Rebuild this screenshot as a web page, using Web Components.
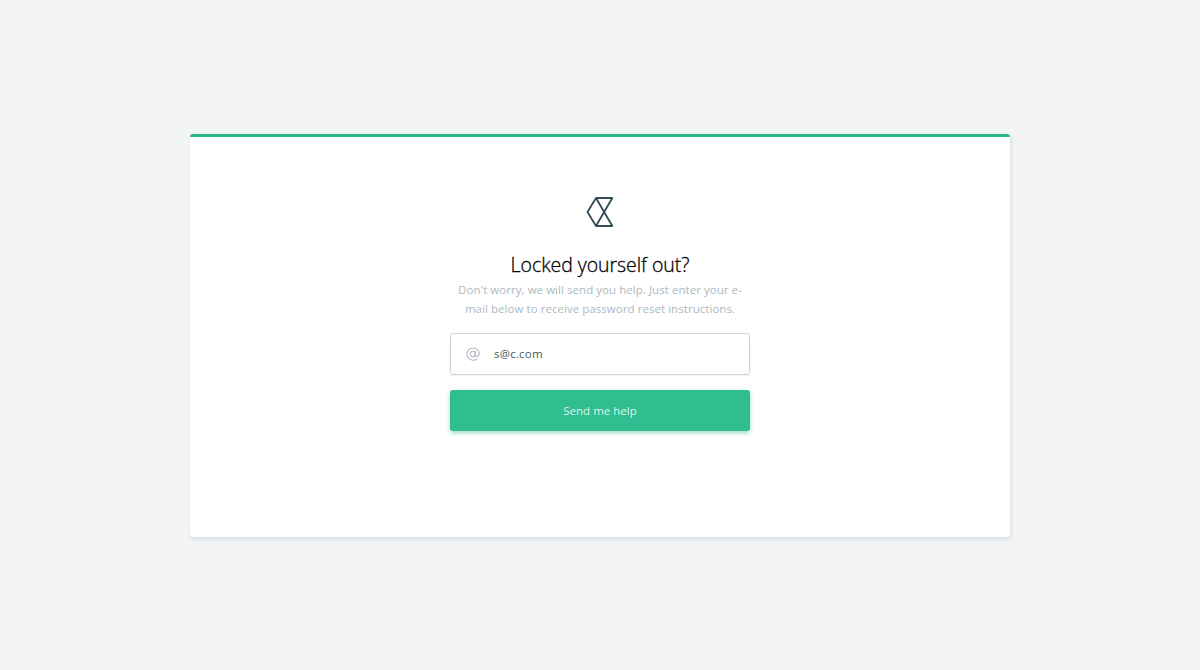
<!DOCTYPE html>
<html lang="en">
<head>
<meta charset="utf-8">
<title>Reset password</title>
<style>
body{margin:0;min-height:100vh;background:#f2f4f6;font-family:"Open Sans","Noto Sans",sans-serif;font-size:11.500px;display:grid;place-items:center}
</style>
</head>
<body>
<auth-card>
  <brand-logo></brand-logo>
  <card-heading>
    Locked yourself out?
    <span slot="first">Don't worry, we will send you help. Just enter your e-</span>
    <span slot="second">mail below to receive password reset instructions.</span>
  </card-heading>
  <email-field value="s@c.com"></email-field>
  <submit-button>Send me help</submit-button>
</auth-card>
<script>
const define = (name, html) => customElements.define(name, class extends HTMLElement {
  constructor() {
    super();
    this.attachShadow({mode: "open"}).innerHTML = html;
  }
  connectedCallback() {
    const input = this.shadowRoot.querySelector("input");
    if (input) input.value = this.getAttribute("value") || "";
  }
});

define("auth-card", `<style>
  :host{display:flex;flex-direction:column;align-items:center;box-sizing:border-box;width:820px;height:403px;margin-top:1px;padding-top:60px;background:#fff;border-top:3px solid #2bb68a;border-radius:3px;box-shadow:1px 2px 4px rgba(50,85,105,.14)}
</style><slot></slot>`);

define("brand-logo", `<style>
  :host{display:block;height:30px} svg{display:block}
</style><svg width="28" height="30" viewBox="0 0 28 30" fill="none" stroke="#334b55" stroke-width="1.800" stroke-linejoin="round">
  <path d="M10 1H26.300L10 29H26.300L10 1L1.500 15L10 29"/></svg>`);

define("card-heading", `<style>
  :host{display:block;width:300px;text-align:center;margin-top:23px}
  h1{margin:0;font-size:19.500px;line-height:30px;letter-spacing:-.05px;color:#000;font-weight:300;-webkit-text-stroke:.3px #000;white-space:nowrap}
  p{margin:0;line-height:19px;color:#adb9bf;letter-spacing:.05px;white-space:nowrap}
  ::slotted(span){display:block}
</style><h1><slot></slot></h1><p><slot name="first"></slot><slot name="second"></slot></p>`);

define("email-field", `<style>
  :host{display:flex;align-items:center;box-sizing:border-box;width:300px;height:42px;margin-top:15px;padding-left:15px;border:1px solid #cdd8db;border-radius:3px;box-shadow:0 1px 2px rgba(50,85,105,.08)}
  svg{display:block;flex:none}
  input{border:0;outline:0;padding:0 0 1px;margin-left:14px;width:230px;font:inherit;letter-spacing:.2px;color:#465b63;background:none}
</style><svg width="14" height="14" viewBox="0 0 14 14" fill="none" stroke="#b4bac7" stroke-width="1.1" stroke-linecap="round">
  <ellipse cx="6.800" cy="7" rx="2.400" ry="2.800"/><path d="M9.500 4.200L9 8.200Q9 10 10.600 9.600Q13.300 8.800 13.300 6A6.300 6.100 0 1 0 10.700 12.100"/></svg><input aria-label="E-mail">`);

define("submit-button", `<style>
  :host{display:block;width:300px;height:41px;margin-top:15px}
  button{display:block;width:100%;height:100%;padding:0;border:0;border-radius:3px;background:#30be91;color:#dff5ec;font:inherit;box-shadow:0 2px 4px rgba(43,175,132,.45)}
</style><button type="button"><slot></slot></button>`);
</script>
</body>
</html>
